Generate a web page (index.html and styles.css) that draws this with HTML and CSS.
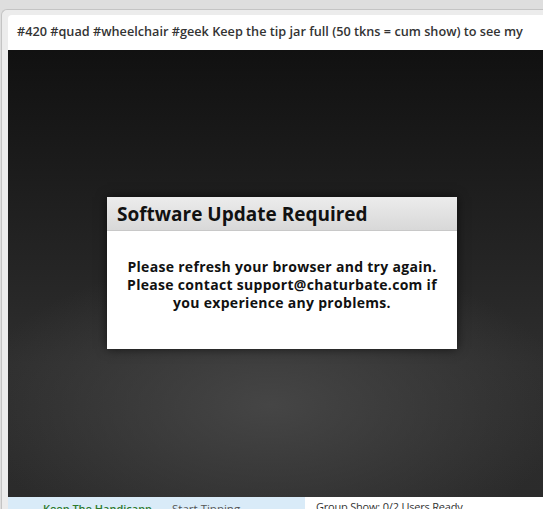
FILE: index.html
```html
<!DOCTYPE html>
<html>
<head>
<meta charset="utf-8">
<link rel="stylesheet" href="styles.css">
</head>
<body>
<div class="frame">
  <div class="panel">
    <div class="subject">#420 #quad #wheelchair #geek Keep the tip jar full (50 tkns = cum show) to see my</div>
    <div class="video">
      <div class="modal">
        <div class="modal-head">Software Update Required</div>
        <div class="modal-body">Please refresh your browser and try again.<br>Please contact support@chaturbate.com if<br>you experience any problems.</div>
      </div>
    </div>
    <div class="bottom">
      <div class="tipbar">
        <span class="goal">Keep The Handicapp</span>
        <span class="tip">Start Tipping</span>
      </div>
      <div class="group">Group Show: 0/2 Users Ready</div>
    </div>
  </div>
</div>
</body>
</html>
```

FILE: styles.css
```css
html, body {
  margin: 0;
  padding: 0;
  overflow: hidden;
  background: #dedede;
  width: 543px;
  height: 509px;
}
body {
  font-family: "Open Sans", "DejaVu Sans", sans-serif;
}
.frame {
  padding: 9px 0 0 1px;
  width: 600px;
}
.panel {
  border: 1px solid #c4c4c4;
  border-right: none;
  border-radius: 6px 0 0 0;
  background: #ececec;
  padding: 5px 0 0 6px;
}
.subject {
  background: #fff;
  border-radius: 4px 0 0 0;
  height: 35px;
  line-height: 33px;
  padding-left: 9px;
  font-size: 12.7px;
  font-weight: 600;
  color: #333;
  white-space: nowrap;
}
.video {
  height: 447px;
  background:
    radial-gradient(ellipse 300px 150px at 262px 355px, rgba(72,72,72,0.9), rgba(60,60,60,0) 100%),
    linear-gradient(#111 0%, #1b1b1b 25%, #2e2e2e 70%, #2b2b2b 100%);
  display: flex;
  padding-top: 147px;
  padding-left: 99px;
  box-sizing: border-box;
}
.modal {
  width: 350px;
  height: 152px;
  background: #fff;
  box-shadow: 0 0 10px rgba(0,0,0,0.6);
  display: flex;
  flex-direction: column;
}
.modal-head {
  height: 33px;
  background: linear-gradient(#ececec, #d8d8d8);
  border-bottom: 1px solid #c8c8c8;
  font-size: 19px;
  font-weight: 700;
  color: #111;
  line-height: 34px;
  padding-left: 10px;
}
.modal-body {
  padding-top: 27px;
  text-align: center;
  font-size: 14px;
  letter-spacing: 0.3px;
  font-weight: 700;
  line-height: 18px;
  color: #111;
}
.bottom {
  display: flex;
  height: 20px;
  background: #fff;
}
.tipbar {
  width: 297px;
  background: #d9ebf8;
  padding-left: 35px;
  box-sizing: border-box;
  line-height: 20px;
  white-space: nowrap;
}
.goal {
  color: #2d7a2d;
  font-weight: 600;
  font-size: 11px;
  margin-right: 16px;
}
.tip {
  color: #555;
  font-size: 11.5px;
}
.group {
  padding-left: 11px;
  font-size: 11px;
  letter-spacing: -0.2px;
  line-height: 20px;
  color: #333;
  white-space: nowrap;
}
```
